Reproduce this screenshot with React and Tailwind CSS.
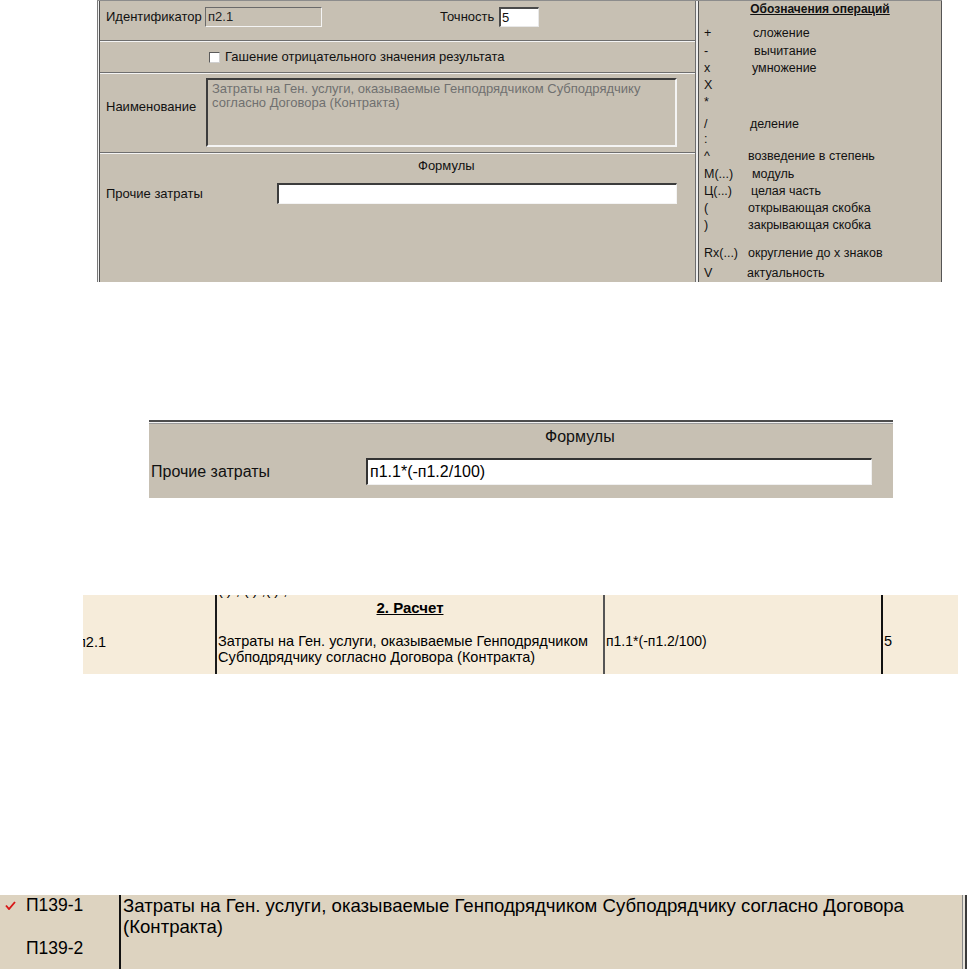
const ops = [
  { s: "+", d: "сложение", sw: "w-[49px]", mt: "mt-[8px]" },
  { s: "-", d: "вычитание", sw: "w-[50px]", mt: "mt-[1px]" },
  { s: "x", d: "умножение", sw: "w-[48px]", mt: "" },
  { s: "X", d: "", sw: "w-[48px]", mt: "" },
  { s: "*", d: "", sw: "w-[48px]", mt: "" },
  { s: "/", d: "деление", sw: "w-[46px]", mt: "mt-[5px]" },
  { s: ":", d: "", sw: "w-[46px]", mt: "-mt-[2px]" },
  { s: "^", d: "возведение в степень", sw: "w-[44px]", mt: "" },
  { s: "М(...)", d: "модуль", sw: "w-[48px]", mt: "mt-[1px]" },
  { s: "Ц(...)", d: "целая часть", sw: "w-[47px]", mt: "" },
  { s: "(", d: "открывающая скобка", sw: "w-[44px]", mt: "" },
  { s: ")", d: "закрывающая скобка", sw: "w-[44px]", mt: "" },
  { s: "Rx(...)", d: "округление до х знаков", sw: "w-[44px]", mt: "mt-[11px]" },
  { s: "V", d: "актуальность", sw: "w-[43px]", mt: "mt-[3px]" },
];

function Sep() {
  return (
    <div className="flex flex-col shrink-0">
      <div className="h-px bg-[#6e6e6e]" />
      <div className="h-px bg-[#f4f4f4]" />
    </div>
  );
}

function TopPanel() {
  return (
    <div className="ml-[97px] w-[845px] h-[282px] flex bg-[#c7c0b3] border-t border-[#8c8c8c] text-[13px] text-[#111]">
      {/* left double border */}
      <div className="flex shrink-0">
        <div className="w-px bg-[#7a7a7a]" />
        <div className="w-px bg-[#f2f2f2]" />
        <div className="w-px bg-[#505050]" />
      </div>
      {/* left section */}
      <div className="w-[595px] flex flex-col">
        <div className="h-[39px] flex items-start pt-[6px] pl-[6px]">
          <div className="w-[99px] h-[20px] leading-[20px]">Идентификатор</div>
          <div className="w-[117px] h-[20px] border-t border-l border-t-[#6a6a6a] border-l-[#6a6a6a] border-b border-r border-b-[#f4f4f4] border-r-[#f4f4f4] pl-[2px] leading-[17px] text-[#222]">
            п2.1
          </div>
          <div className="ml-[118px] w-[59px] h-[20px] leading-[20px]">Точность</div>
          <div className="w-[40px] h-[20px] bg-white border-t-2 border-l-2 border-t-[#4a4a4a] border-l-[#4a4a4a] border-b border-r border-b-[#e8e8e8] border-r-[#e8e8e8] pl-[1px] leading-[17px]">
            5
          </div>
        </div>
        <Sep />
        <div className="h-[30px] flex items-center pl-[109px]">
          <div className="w-[11px] h-[11px] bg-white border border-t-[#5a5a5a] border-l-[#5a5a5a] border-r-[#d0d0d0] border-b-[#d0d0d0]" />
          <div className="ml-[5px] leading-[20px]">Гашение отрицательного значения результата</div>
        </div>
        <Sep />
        <div className="h-[78px] flex items-start pl-[6px]">
          <div className="w-[100px] mt-[23px] leading-[20px]">Наименование</div>
          <div className="mt-[4px] w-[471px] h-[69px] border-t-2 border-l-2 border-t-[#3c3c3c] border-l-[#3c3c3c] border-b-2 border-r-2 border-b-[#f4f4f4] border-r-[#f4f4f4] pt-[2px] pl-[4px] leading-[14px] text-[#707070]">
            Затраты на Ген. услуги, оказываемые Генподрядчиком Субподрядчику
            <br />
            согласно Договора (Контракта)
          </div>
        </div>
        <Sep />
        <div className="flex-1 flex flex-col">
          <div className="pt-[2px] pl-[318px] leading-[20px]">Формулы</div>
          <div className="mt-[7px] flex items-center pl-[6px]">
            <div className="w-[171px] leading-[20px]">Прочие затраты</div>
            <div className="w-[400px] h-[21px] bg-white border-t-2 border-l-2 border-t-[#3c3c3c] border-l-[#3c3c3c] border-b border-r border-b-[#f4f4f4] border-r-[#f4f4f4]" />
          </div>
        </div>
      </div>
      {/* divider */}
      <div className="flex shrink-0">
        <div className="w-px bg-[#6d6d6d]" />
        <div className="w-[2px] bg-[#efefef]" />
        <div className="w-px bg-[#505050]" />
      </div>
      {/* right section */}
      <div className="w-[243px] border-r border-[#555] flex flex-col text-[12.5px]">
        <div className="h-[16px] leading-[16px] text-center font-bold underline text-[12px]">
          Обозначения операций
        </div>
        {ops.map((o, i) => (
          <div key={i} className={`h-[17px] leading-[17px] flex pl-[5px] whitespace-nowrap ${o.mt}`}>
            <span className={`${o.sw} shrink-0`}>{o.s}</span>
            <span>{o.d}</span>
          </div>
        ))}
      </div>
    </div>
  );
}

function FormulaPanel() {
  return (
    <div className="mt-[138px] ml-[149px] w-[744px] h-[78px] bg-[#c7c0b3] flex flex-col text-[16px] text-[#111]">
      <div className="h-[2px] bg-[#4d4d4d] shrink-0" />
      <div className="h-px bg-[#f2f2f2] shrink-0" />
      <div className="h-px bg-[#9a9a9a] shrink-0" />
      <div className="pt-[3px] pl-[396px] leading-[20px]">Формулы</div>
      <div className="mt-[11px] flex items-center pl-[2px]">
        <div className="w-[215px] leading-[20px]">Прочие затраты</div>
        <div className="w-[506px] h-[27px] bg-white border-t-2 border-l-2 border-t-[#333] border-l-[#333] border-b border-r border-b-[#f0f0f0] border-r-[#f0f0f0] pl-[2px] leading-[23px] text-black">
          п1.1*(-п1.2/100)
        </div>
      </div>
    </div>
  );
}

function TableRow() {
  return (
    <div className="mt-[97px] ml-[83px] w-[875px] h-[79px] bg-[#f6ecda] flex text-[14.5px] text-black">
      <div className="w-[132px] overflow-hidden">
        <div className="-ml-[5px] pt-[39px] leading-[16px]">п2.1</div>
      </div>
      <div className="w-[2px] bg-[#1a1a1a]" />
      <div className="w-[386px] flex flex-col">
        <div className="h-[3px] shrink-0 overflow-hidden">
          <div className="-translate-y-[13px] pl-[1px] leading-[16px] whitespace-nowrap">
            (  )  ,      ( ) ,(  )    ,
          </div>
        </div>
        <div className="mt-px h-[17px] leading-[17px] text-center font-bold underline text-[15px]">2. Расчет</div>
        <div className="mt-[17px] pl-[1px] leading-[16px]">
          Затраты на Ген. услуги, оказываемые Генподрядчиком
          <br />
          Субподрядчику согласно Договора (Контракта)
        </div>
      </div>
      <div className="w-[2px] bg-[#555]" />
      <div className="w-[276px] pt-[38px] pl-[1px] leading-[16px] text-[14px]">п1.1*(-п1.2/100)</div>
      <div className="w-[2px] bg-[#111]" />
      <div className="flex-1 pt-[38px] pl-[1px] leading-[16px]">5</div>
    </div>
  );
}

function BottomRow() {
  return (
    <div className="mt-[221px] w-[967px] h-[74px] flex text-black">
      <div className="w-[119px] bg-[#ddd3c0] flex flex-col">
        <div className="flex items-center h-[21px]">
          <svg className="ml-[5px] w-[11px] h-[9px]" viewBox="0 0 11 9">
            <path d="M1 4.5 L4 8 L10 1" fill="none" stroke="#d81818" strokeWidth="1.9" />
          </svg>
          <span className="ml-[10px] text-[17.5px] leading-[21px]">П139-1</span>
        </div>
        <div className="mt-[22px] ml-[26px] text-[17.5px] leading-[21px]">П139-2</div>
      </div>
      <div className="w-[2px] bg-[#111]" />
      <div className="w-[841px] bg-[#ddd3c0] pl-[2px] text-[18.6px] leading-[21px]">
        Затраты на Ген. услуги, оказываемые Генподрядчиком Субподрядчику согласно Договора
        <br />
        (Контракта)
      </div>
      <div className="w-px bg-[#8a8a8a]" />
      <div className="w-[2px] bg-[#e8e4dc]" />
      <div className="w-[2px] bg-[#3a3a3a]" />
    </div>
  );
}

export default function App() {
  return (
    <div className="w-[970px] h-[969px] bg-white overflow-hidden flex flex-col font-['Liberation_Sans',Arial,sans-serif]">
      <TopPanel />
      <FormulaPanel />
      <TableRow />
      <BottomRow />
    </div>
  );
}
